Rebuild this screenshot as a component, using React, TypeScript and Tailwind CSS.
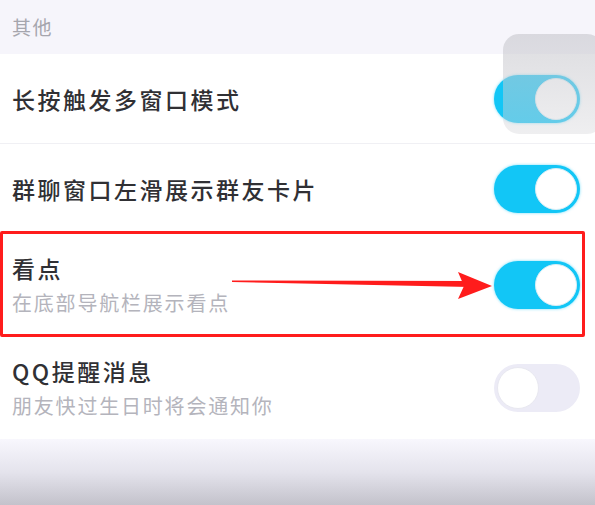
import React from 'react';

interface RowProps {
  title: string
  sub?: string
  on: boolean
  h: string
}

function Toggle({ on }: { on: boolean }) {
  if (on) {
    return (
      <div className="w-[86px] h-[48px] rounded-full bg-[#12c6f6] flex items-center justify-end pr-[3px] shadow-[0_0_3px_rgba(18,198,246,0.6)]">
        <div className="w-[42px] h-[42px] rounded-full bg-white border border-[#d8eef6]" />
      </div>
    )
  }
  return (
    <div className="w-[86px] h-[48px] rounded-full bg-[#ecebf6] flex items-center justify-start pl-[3px]">
      <div className="w-[42px] h-[42px] rounded-full bg-white border border-[#e8e8f0]" />
    </div>
  )
}

function Row({ title, sub, on, h }: RowProps) {
  return (
    <div className={`flex items-center justify-between pl-[12px] pr-[15px] bg-white ${h}`}>
      <div className="flex flex-col">
        <span className="text-[23px] leading-[30px] font-medium text-[#303034] tracking-[2.5px]">{title}</span>
        {sub && <span className="text-[20px] leading-[28px] mt-[6px] text-[#b4b4bc] tracking-[1.8px]">{sub}</span>}
      </div>
      <Toggle on={on} />
    </div>
  )
}

export default function App() {
  return (
    <div className="relative w-[595px] h-[505px] overflow-hidden bg-white" style={{ fontFamily: '"Noto Sans CJK SC", "Noto Sans", sans-serif' }}>
      <div className="h-[54px] bg-[#f6f5fb] flex items-center pl-[12px]">
        <span className="text-[19px] text-[#a6a6ae] tracking-[1.5px]">其他</span>
      </div>

      <div className="border-b border-[#f0f0f4]">
        <Row title="长按触发多窗口模式" on={true} h="h-[89px]" />
      </div>
      <Row title="群聊窗口左滑展示群友卡片" on={true} h="h-[90px]" />
      <Row title="看点" sub="在底部导航栏展示看点" on={true} h="h-[102px]" />
      <Row title="QQ提醒消息" sub="朋友快过生日时将会通知你" on={false} h="h-[103px]" />

      <div className="h-[67px] bg-gradient-to-b from-[#f8f7fd] via-[#e4e3ec] to-[#c2c1ca]" />

      {/* press highlight over first switch */}
      <div className="absolute left-[503px] top-[34px] w-[100px] h-[100px] rounded-[16px] bg-gradient-to-b from-[#c6c6cc]/60 to-[#d6d6da]/40" />

      {/* red annotation box */}
      <div className="absolute left-0 top-[231px] w-[585px] h-[106px] border-[3px] border-[#ff1c1c] rounded-[2px]" />

      {/* arrow */}
      <svg className="absolute left-0 top-0" width="595" height="505" viewBox="0 0 595 505">
        <polygon points="232,280.5 470,281 470,287 232,282" fill="#ff1c1c" />
        <polygon points="458,272 492,286 458,299 464,286" fill="#ff1c1c" />
      </svg>
    </div>
  )
}
